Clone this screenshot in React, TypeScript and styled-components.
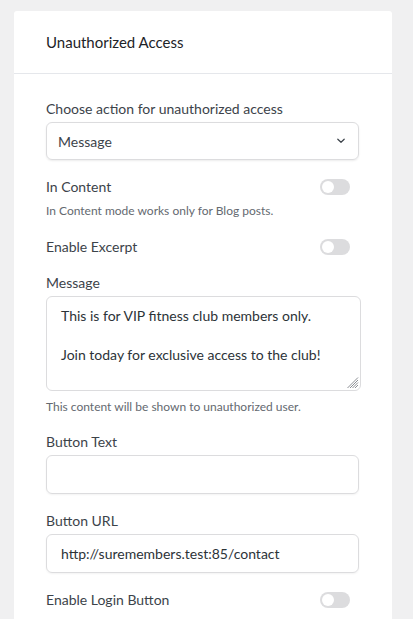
import React from "react";
import styled, { createGlobalStyle } from "styled-components";

const Global = createGlobalStyle`
  html, body { margin: 0; padding: 0; background: #f0f0f1; }
  body { font-family: Lato, "Noto Sans", sans-serif; -webkit-font-smoothing: antialiased; }
  * { box-sizing: border-box; }
`;

const Page = styled.div`
  padding: 11px 21px 0 14px;
  min-height: 619px;
`;

const Card = styled.div`
  background: #fff;
  border-radius: 3px;
  min-height: 620px;
`;

const Header = styled.div`
  height: 63px;
  display: flex;
  align-items: center;
  padding: 0 32px;
  border-bottom: 1px solid #e5e7eb;
  font-size: 15px;
  color: #1d2327;
`;

const Body = styled.div`
  padding: 25px 33px 0 32px;
  display: flex;
  flex-direction: column;
`;

const Label = styled.div<{ $mt?: number }>`
  font-size: 14px;
  line-height: 20px;
  color: #3c434a;
  margin-top: ${(p) => p.$mt ?? 0}px;
`;

const Help = styled.div<{ $mt?: number }>`
  font-size: 12px;
  line-height: 16px;
  color: #646970;
  margin-top: ${(p) => p.$mt ?? 0}px;
`;

const ToggleRow = styled.div<{ $mt?: number }>`
  display: flex;
  align-items: center;
  justify-content: space-between;
  padding-right: 9px;
  margin-top: ${(p) => p.$mt ?? 0}px;
`;

const Track = styled.span`
  position: relative;
  width: 30px;
  height: 16px;
  border-radius: 8px;
  background: #dcdcde;
  display: inline-block;
`;

const Knob = styled.span`
  position: absolute;
  left: 2px;
  top: 2px;
  width: 12px;
  height: 12px;
  border-radius: 50%;
  background: #fff;
`;

const SelectBox = styled.div`
  margin-top: 3px;
  height: 38px;
  border: 1px solid #dcdcde;
  border-radius: 6px;
  box-shadow: 0 1px 2px rgba(0, 0, 0, 0.08);
  display: flex;
  align-items: center;
  justify-content: space-between;
  padding: 0 12px 0 11px;
  font-size: 14px;
  color: #3c434a;
`;

const Input = styled.div<{ $mt?: number }>`
  margin-top: ${(p) => p.$mt ?? 3}px;
  height: 39px;
  border: 1px solid #dcdcde;
  border-radius: 6px;
  box-shadow: 0 1px 2px rgba(0, 0, 0, 0.05);
  display: flex;
  align-items: center;
  padding: 0 14px;
  font-size: 14px;
  color: #2c3338;
`;

const TextArea = styled.div`
  position: relative;
  margin-top: 3px;
  margin-right: -2px;
  height: 95px;
  border: 1px solid #dcdcde;
  border-radius: 6px;
  padding: 9px 14px;
  font-size: 14px;
  line-height: 19.5px;
  color: #2c3338;
  white-space: pre-wrap;
`;

const Grip = styled.svg`
  position: absolute;
  right: 1px;
  bottom: 1px;
`;

const Toggle = () => (
  <Track>
    <Knob />
  </Track>
);

export default function App() {
  return (
    <>
      <Global />
      <Page>
        <Card>
          <Header>Unauthorized Access</Header>
          <Body>
            <Label>Choose action for unauthorized access</Label>
            <SelectBox>
              <span>Message</span>
              <svg width="10" height="6" viewBox="0 0 10 6" fill="none">
                <path d="M1.8 1.2 L5 4.3 L8.2 1.2" stroke="#3c434a" strokeWidth="1.2" strokeLinecap="round" strokeLinejoin="round" />
              </svg>
            </SelectBox>
            <ToggleRow $mt={17}>
              <Label>In Content</Label>
              <Toggle />
            </ToggleRow>
            <Help $mt={6}>In Content mode works only for Blog posts.</Help>
            <ToggleRow $mt={18}>
              <Label>Enable Excerpt</Label>
              <Toggle />
            </ToggleRow>
            <Label $mt={16}>Message</Label>
            <TextArea>
              {"This is for VIP fitness club members only.\n\nJoin today for exclusive access to the club!"}
              <Grip width="12" height="12" viewBox="0 0 12 12">
                <path d="M11 3 L3 11 M11 5.5 L5.5 11 M11 8 L8 11 M11 0.5 L0.5 11" stroke="#8c8f94" strokeWidth="1" />
              </Grip>
            </TextArea>
            <Help $mt={8}>This content will be shown to unauthorized user.</Help>
            <Label $mt={17}>Button Text</Label>
            <Input />
            <Label $mt={17}>Button URL</Label>
            <Input>http://suremembers.test:85/contact</Input>
            <ToggleRow $mt={17}>
              <Label>Enable Login Button</Label>
              <Toggle />
            </ToggleRow>
          </Body>
        </Card>
      </Page>
    </>
  );
}
